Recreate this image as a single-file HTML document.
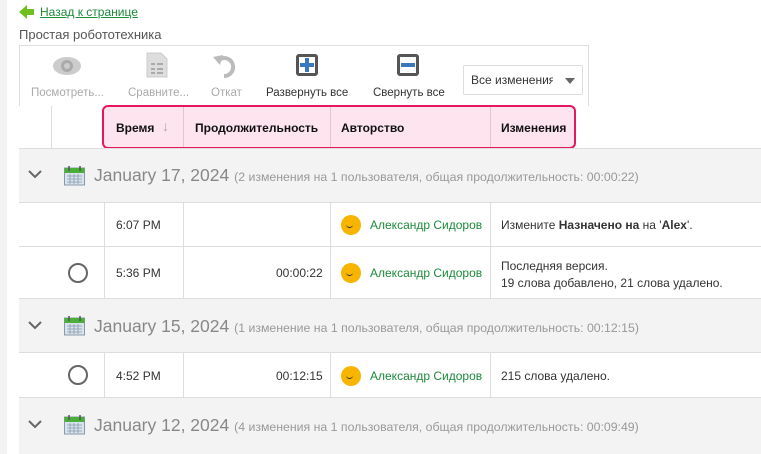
<!DOCTYPE html>
<html><head><meta charset="utf-8"><style>
*{margin:0;padding:0;box-sizing:border-box}
body{width:761px;height:454px;overflow:hidden;background:#fff;font-family:"Segoe UI","Liberation Sans","DejaVu Sans",sans-serif;font-size:12px;color:#333;position:relative}
.a{position:absolute;white-space:nowrap}
.vl{position:absolute;width:1px;background:#ddd}
.hl{position:absolute;height:1px;background:#ddd;left:19px;right:0}
.grp{position:absolute;left:19px;right:0;background:#f3f3f3}
.green{color:#1b8a3a}
.av{position:absolute;width:20px;height:20px;border-radius:50%;background:#f7b500}
.av:after{content:"";position:absolute;left:5px;top:9px;width:7px;height:3px;border-bottom:1.5px solid #333;border-radius:0 0 4px 4px}
.rad{position:absolute;width:20px;height:20px;border:2px solid #666;border-radius:50%}
.dt{font-size:17.5px;color:#888}
.dt span{font-size:12.3px;color:#999}
</style></head><body>
<div class="a" style="left:0;top:0;width:7px;height:454px;background:#f3f3f3"></div>
<svg class="a" style="left:19px;top:5px" width="16" height="14"><path d="M0 7 L8 0 V4 H15 V10 H8 V14 Z" fill="#6fbf1f"/></svg>
<div class="a green" style="left:40px;top:5px;text-decoration:underline;font-size:12px">Назад к странице</div>
<div class="a" style="left:19px;top:27px;font-size:13px;color:#555">Простая робототехника</div>
<div class="a" style="left:19px;top:45px;width:570px;height:61px;border:1px solid #ddd;border-top:none;border-bottom:none"></div>
<div class="a" style="left:19px;top:45px;width:570px;height:1px;background:#ddd"></div>
<svg class="a" style="left:52px;top:55px" width="30" height="22"><ellipse cx="15" cy="11" rx="14" ry="9" fill="#ccc"/><circle cx="15" cy="11" r="6" fill="#aaa"/><circle cx="15" cy="11" r="3" fill="#ccc"/></svg>
<svg class="a" style="left:146px;top:52px" width="22" height="26"><path d="M1 1H15L21 7V25H1Z" fill="#ddd" stroke="#ccc"/><path d="M5 12h4M11 12h6M5 17h4M11 17h6M5 21h4M11 21h6" stroke="#aaa" stroke-width="2"/></svg>
<svg class="a" style="left:212px;top:54px" width="28" height="24"><path d="M8 5 A9 9 0 1 1 12 22" fill="none" stroke="#bbb" stroke-width="4"/><path d="M1 3 L11 1 L8 11Z" fill="#bbb"/></svg>
<div class="a" style="left:296px;top:54px;width:22px;height:22px;border:3px solid #555;border-radius:3px"></div>
<div class="a" style="left:300px;top:63px;width:14px;height:4px;background:#3a78c0"></div>
<div class="a" style="left:305px;top:58px;width:4px;height:14px;background:#3a78c0"></div>
<div class="a" style="left:397px;top:54px;width:22px;height:22px;border:3px solid #555;border-radius:3px"></div>
<div class="a" style="left:401px;top:63px;width:14px;height:4px;background:#3a78c0"></div>
<div class="a" style="left:31px;top:87px;color:#aaa;font-size:11.5px">Посмотреть...</div>
<div class="a" style="left:128px;top:87px;color:#aaa;font-size:11.5px">Сравните...</div>
<div class="a" style="left:211px;top:87px;color:#aaa;font-size:11.5px">Откат</div>
<div class="a" style="left:266px;top:87px;color:#333;font-size:11.5px">Развернуть все</div>
<div class="a" style="left:373px;top:87px;color:#333;font-size:11.5px">Свернуть все</div>
<div class="a" style="left:463px;top:65px;width:120px;height:30px;border:1px solid #ddd;border-radius:2px"></div>
<div class="a" style="left:471px;top:73px;width:82px;overflow:hidden;color:#333">Все изменения</div>
<div class="a" style="left:565px;top:78px;border-left:5px solid transparent;border-right:5px solid transparent;border-top:6px solid #666"></div>
<div class="vl" style="left:51px;top:106px;height:42px"></div>
<div class="a" style="left:102px;top:105px;width:474px;height:44px;background:#fde4ee;border:2px solid #e8175d;border-radius:6px"></div>
<div class="vl" style="left:183px;top:107px;height:40px;background:#e0c6d0"></div>
<div class="vl" style="left:330px;top:107px;height:40px;background:#e0c6d0"></div>
<div class="vl" style="left:490px;top:107px;height:40px;background:#e0c6d0"></div>
<div class="a" style="left:116px;top:121px;font-weight:bold;color:#111">Время</div>
<div class="a" style="left:162px;top:118px;color:#aaa;font-size:14px">↓</div>
<div class="a" style="left:195px;top:121px;font-weight:bold;color:#111">Продолжительность</div>
<div class="a" style="left:341px;top:121px;font-weight:bold;color:#111">Авторство</div>
<div class="a" style="left:501px;top:121px;font-weight:bold;color:#111">Изменения</div>
<div class="hl" style="top:148px"></div>
<div class="grp" style="top:149px;height:53px"></div>
<div class="grp" style="top:299px;height:53px"></div>
<div class="grp" style="top:398px;height:56px"></div>
<div class="hl" style="top:202px"></div><div class="hl" style="top:246px"></div><div class="hl" style="top:298px"></div>
<div class="hl" style="top:352px"></div><div class="hl" style="top:397px"></div>
<div class="vl" style="left:104px;top:203px;height:95px"></div><div class="vl" style="left:183px;top:203px;height:95px"></div><div class="vl" style="left:330px;top:203px;height:95px"></div><div class="vl" style="left:490px;top:203px;height:95px"></div>
<div class="vl" style="left:104px;top:353px;height:44px"></div><div class="vl" style="left:183px;top:353px;height:44px"></div><div class="vl" style="left:330px;top:353px;height:44px"></div><div class="vl" style="left:490px;top:353px;height:44px"></div>
<svg class="a" style="left:28px;top:170px" width="14" height="9"><path d="M1 1L7 7L13 1" fill="none" stroke="#666" stroke-width="2"/></svg>
<svg class="a" style="left:64px;top:165px" width="21" height="21"><rect x="0.5" y="3" width="20" height="17" fill="#d9e3ee" stroke="#8899aa"/><rect x="0.5" y="3" width="20" height="5" fill="#4cae3a"/><path d="M3 11h15M3 14h15M3 17h15M6 9v10M10 9v10M14 9v10" stroke="#8899aa" stroke-width="0.8"/><path d="M5 1v5M16 1v5" stroke="#555" stroke-width="1.5"/></svg>
<div class="a dt" style="left:94px;top:165px">January 17, 2024 <span>(2 изменения на 1 пользователя, общая продолжительность: 00:00:22)</span></div>
<div class="a" style="left:116px;top:218px">6:07 PM</div>
<div class="av" style="left:341px;top:215px"></div>
<div class="a green" style="left:370px;top:218px">Александр Сидоров</div>
<div class="a" style="left:501px;top:218px">Измените <b>Назначено на</b> на '<b>Alex</b>'.</div>
<div class="rad" style="left:68px;top:263px"></div>
<div class="a" style="left:116px;top:266px">5:36 PM</div>
<div class="a" style="left:276px;top:266px">00:00:22</div>
<div class="av" style="left:341px;top:263px"></div>
<div class="a green" style="left:370px;top:266px">Александр Сидоров</div>
<div class="a" style="left:501px;top:258px;line-height:17px">Последняя версия.<br>19 слова добавлено, 21 слова удалено.</div>
<svg class="a" style="left:28px;top:321px" width="14" height="9"><path d="M1 1L7 7L13 1" fill="none" stroke="#666" stroke-width="2"/></svg>
<svg class="a" style="left:64px;top:315px" width="21" height="21"><rect x="0.5" y="3" width="20" height="17" fill="#d9e3ee" stroke="#8899aa"/><rect x="0.5" y="3" width="20" height="5" fill="#4cae3a"/><path d="M3 11h15M3 14h15M3 17h15M6 9v10M10 9v10M14 9v10" stroke="#8899aa" stroke-width="0.8"/><path d="M5 1v5M16 1v5" stroke="#555" stroke-width="1.5"/></svg>
<div class="a dt" style="left:94px;top:316px">January 15, 2024 <span>(1 изменение на 1 пользователя, общая продолжительность: 00:12:15)</span></div>
<div class="rad" style="left:68px;top:365px"></div>
<div class="a" style="left:116px;top:369px">4:52 PM</div>
<div class="a" style="left:276px;top:369px">00:12:15</div>
<div class="av" style="left:341px;top:366px"></div>
<div class="a green" style="left:370px;top:369px">Александр Сидоров</div>
<div class="a" style="left:501px;top:369px">215 слова удалено.</div>
<svg class="a" style="left:28px;top:420px" width="14" height="9"><path d="M1 1L7 7L13 1" fill="none" stroke="#666" stroke-width="2"/></svg>
<svg class="a" style="left:64px;top:414px" width="21" height="21"><rect x="0.5" y="3" width="20" height="17" fill="#d9e3ee" stroke="#8899aa"/><rect x="0.5" y="3" width="20" height="5" fill="#4cae3a"/><path d="M3 11h15M3 14h15M3 17h15M6 9v10M10 9v10M14 9v10" stroke="#8899aa" stroke-width="0.8"/><path d="M5 1v5M16 1v5" stroke="#555" stroke-width="1.5"/></svg>
<div class="a dt" style="left:94px;top:415px">January 12, 2024 <span>(4 изменения на 1 пользователя, общая продолжительность: 00:09:49)</span></div>
</body></html>
